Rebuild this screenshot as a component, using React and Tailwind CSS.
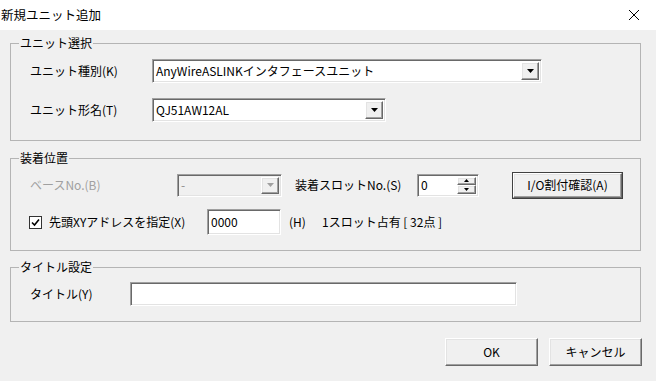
import React from 'react';

const sunken = "border border-t-[#a0a0a0] border-l-[#a0a0a0] border-r-white border-b-white shadow-[inset_1px_1px_0_#696969,inset_-1px_-1px_0_#e3e3e3]";
const raised = "border border-t-white border-l-white border-r-[#696969] border-b-[#696969] shadow-[inset_-1px_-1px_0_#a0a0a0,inset_1px_1px_0_#e3e3e3] bg-[#f0f0f0]";

function Arrow({ color = "#000" }) {
  return (
    <svg width="7" height="4" viewBox="0 0 7 4">
      <polygon points="0,0 7,0 3.5,4" fill={color} />
    </svg>
  );
}

function Combo({ className, value, disabled }) {
  return (
    <div className={`flex h-[24px] p-[2px] ${sunken} ${disabled ? 'bg-[#f0f0f0]' : 'bg-white'} ${className}`}>
      <div className={`flex-1 flex items-center px-[1px] ${disabled ? 'text-[#8c8c8c]' : 'text-black'}`}>{value}</div>
      <div className={`w-[18px] h-full flex items-center justify-center ${raised}`}>
        <Arrow color={disabled ? '#a0a0a0' : '#000'} />
      </div>
    </div>
  );
}

function Field({ className, value }) {
  return (
    <div className={`flex items-center bg-white px-[3px] ${sunken} ${className}`}>{value}</div>
  );
}

function Button({ className, children, focused }) {
  if (focused) {
    return (
      <div className={`border border-[#404040] ${className}`}>
        <div className={`w-full h-full flex items-center justify-center ${raised}`}>{children}</div>
      </div>
    );
  }
  return (
    <div className={`flex items-center justify-center ${raised} ${className}`}>{children}</div>
  );
}

export default function App() {
  return (
    <div className="w-[656px] h-[381px] bg-[#f0f0f0] text-[12px] leading-[16px] text-black font-['Noto_Sans_CJK_JP',sans-serif] overflow-hidden">
      <div className="h-[30px] bg-white flex items-center justify-between pl-[1px] pr-[16px]">
        <span className="text-[12.5px]">新規ユニット追加</span>
        <svg width="12" height="12" viewBox="0 0 12 12">
          <path d="M1 1 L11 11 M11 1 L1 11" stroke="#000" strokeWidth="1" />
        </svg>
      </div>

      <div className="pl-[10px] pr-[15px]">
        <fieldset className="mt-[5px] border border-[#b4b4b4]">
          <legend className="ml-[8px] px-[1px] leading-[16px]">ユニット選択</legend>
          <div className="pl-[19px] pt-[8px] pb-[18px]">
            <div className="flex items-center h-[24px]">
              <span className="w-[122px]">ユニット種別(K)</span>
              <Combo className="w-[390px]" value="AnyWireASLINKインタフェースユニット" />
            </div>
            <div className="flex items-center h-[24px] mt-[15px]">
              <span className="w-[122px]">ユニット形名(T)</span>
              <Combo className="w-[234px]" value="QJ51AW12AL" />
            </div>
          </div>
        </fieldset>

        <fieldset className="mt-[9px] border border-[#b4b4b4]">
          <legend className="ml-[8px] px-[1px] leading-[16px]">装着位置</legend>
          <div className="pl-[19px] pt-[5px] pb-[15px]">
            <div className="flex items-center h-[28px]">
              <span className="w-[147px] text-[#a0a0a0]">ベースNo.(B)</span>
              <Combo className="w-[105px] !h-[23px]" value="-" disabled />
              <span className="ml-[13px] w-[122px]">装着スロットNo.(S)</span>
              <div className={`flex h-[23px] w-[62px] p-[2px] bg-white ${sunken}`}>
                <div className="flex-1 flex items-center px-[1px]">0</div>
                <div className="w-[19px] flex flex-col">
                  <div className={`flex-1 flex items-center justify-center ${raised}`}>
                    <svg width="5" height="3" viewBox="0 0 5 3"><polygon points="2.5,0 5,3 0,3" fill="#000" /></svg>
                  </div>
                  <div className={`flex-1 flex items-center justify-center ${raised}`}>
                    <svg width="5" height="3" viewBox="0 0 5 3"><polygon points="0,0 5,0 2.5,3" fill="#000" /></svg>
                  </div>
                </div>
              </div>
              <Button focused className="ml-[33px] w-[111px] h-[27px]">I/O割付確認(A)</Button>
            </div>
            <div className="flex items-center h-[26px] mt-[10px]">
              <div className="ml-[-1px] w-[13px] h-[13px] border border-[#333] bg-white flex items-center justify-center">
                <svg width="9" height="9" viewBox="0 0 9 9">
                  <path d="M1 4.5 L3.5 7 L8 1.5" stroke="#000" strokeWidth="1.6" fill="none" />
                </svg>
              </div>
              <span className="ml-[7px] w-[158px]">先頭XYアドレスを指定(X)</span>
              <Field className="w-[74px] h-[26px]" value="0000" />
              <span className="ml-[8px] w-[33px]">(H)</span>
              <span>1スロット占有 [ 32点 ]</span>
            </div>
          </div>
        </fieldset>

        <fieldset className="mt-[8px] border border-[#b4b4b4]">
          <legend className="ml-[8px] px-[1px] leading-[16px]">タイトル設定</legend>
          <div className="pl-[19px] pt-[7px] pb-[15px]">
            <div className="flex items-center h-[24px]">
              <span className="w-[100px]">タイトル(Y)</span>
              <Field className="w-[387px] h-[24px]" value="" />
            </div>
          </div>
        </fieldset>

        <div className="mt-[16px] flex justify-end gap-[11px] mr-[-1px]">
          <Button className="w-[93px] h-[28px]">OK</Button>
          <Button className="w-[93px] h-[28px]">キャンセル</Button>
        </div>
      </div>
    </div>
  );
}
